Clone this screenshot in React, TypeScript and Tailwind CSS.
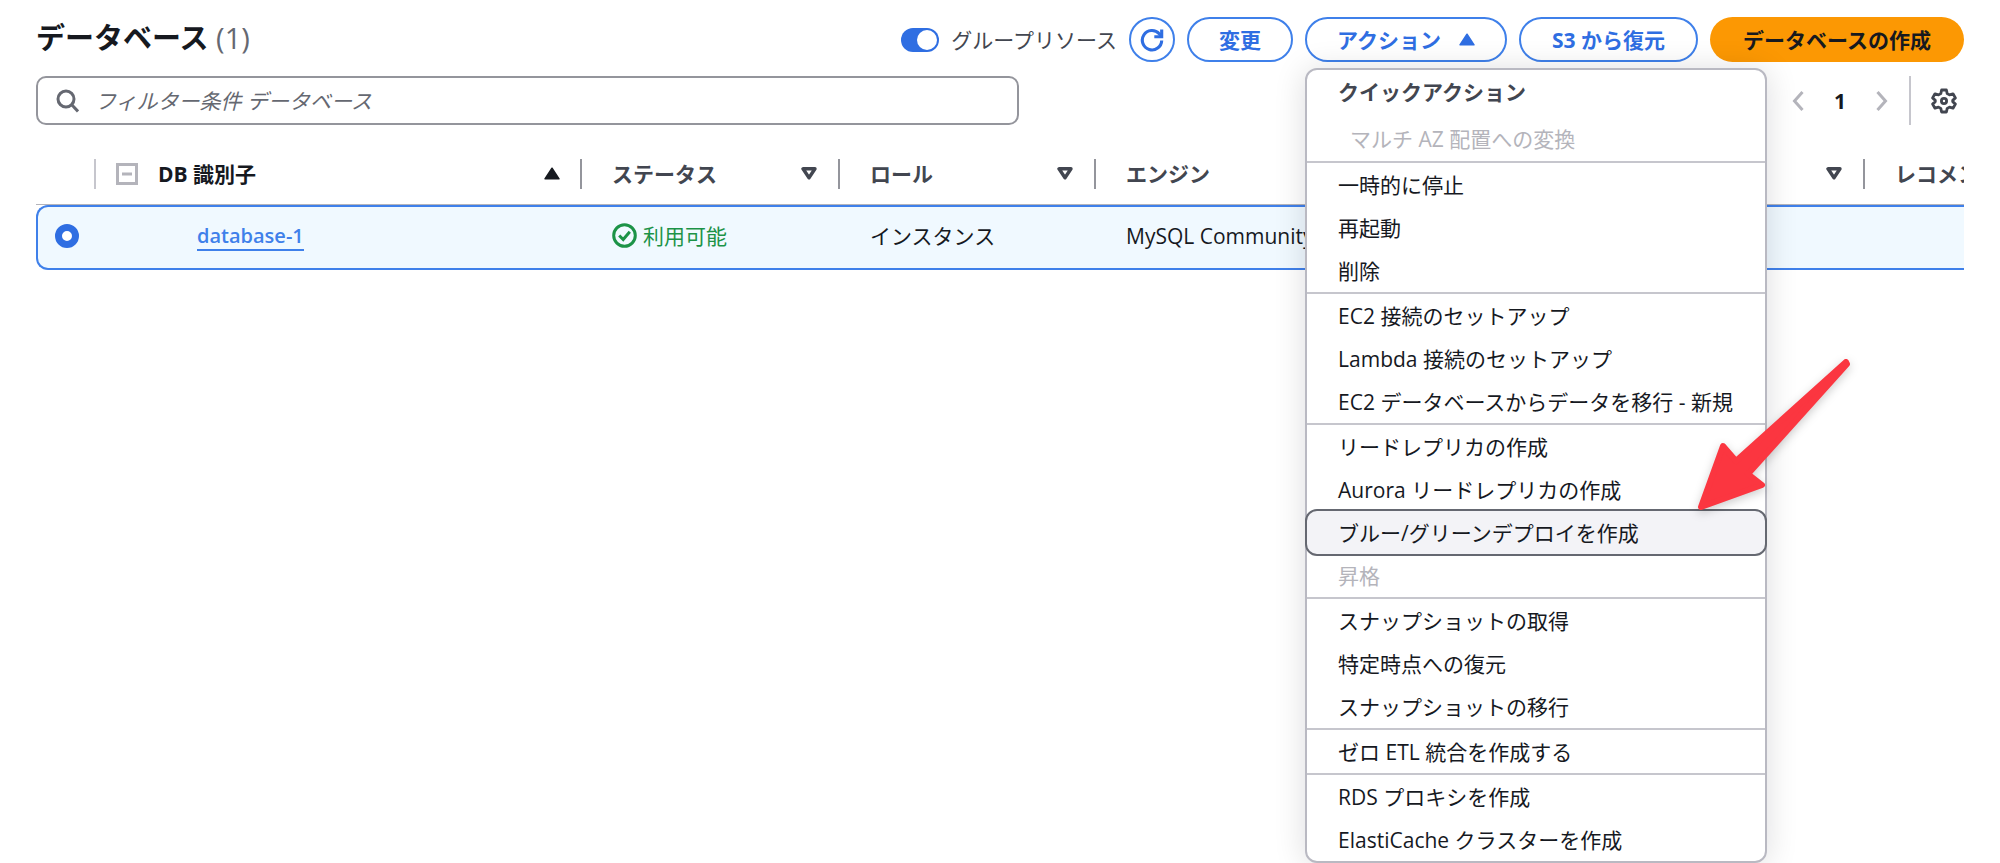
import { useState } from 'react';

interface MenuItem {
    label: string;
    disabled?: boolean;
    active?: boolean;
}

const menuSections: MenuItem[][] = [
    [{ label: '一時的に停止' }, { label: '再起動' }, { label: '削除' }],
    [
        { label: 'EC2 接続のセットアップ' },
        { label: 'Lambda 接続のセットアップ' },
        { label: 'EC2 データベースからデータを移行 - 新規' },
    ],
    [
        { label: 'リードレプリカの作成' },
        { label: 'Aurora リードレプリカの作成' },
        { label: 'ブルー/グリーンデプロイを作成', active: true },
        { label: '昇格', disabled: true },
    ],
    [{ label: 'スナップショットの取得' }, { label: '特定時点への復元' }, { label: 'スナップショットの移行' }],
    [{ label: 'ゼロ ETL 統合を作成する' }],
    [{ label: 'RDS プロキシを作成' }, { label: 'ElastiCache クラスターを作成' }],
];

const outlineButton =
    'flex h-[45px] items-center justify-center rounded-full border-2 border-[#3f80ea] font-bold text-[#2f6ee2] whitespace-nowrap';

function SortUp() {
    return (
        <svg width="16" height="13" viewBox="0 0 16 13" fill="currentColor" stroke="currentColor" strokeWidth="1.5" strokeLinejoin="round">
            <path d="M8 1.2 15 11.8H1Z" />
        </svg>
    );
}

function SortDown() {
    return (
        <svg width="16" height="13" viewBox="0 0 16 13" fill="none" stroke="#424650" strokeWidth="3.4" strokeLinejoin="round">
            <path d="M2 1.8h12L8 10.8Z" />
        </svg>
    );
}

function HeaderCell({ label }: { label: string }) {
    return (
        <th scope="col" className="h-[62px] border-b border-[#b4b4bb] p-0 text-left font-bold text-[#424650]">
            <div className="flex h-[30px] items-center justify-between border-r-2 border-[#94959c] pr-[21px] pl-[30px]">
                <span className="whitespace-nowrap">{label}</span>
                <SortDown />
            </div>
        </th>
    );
}

function ActionsMenu() {
    return (
        <div
            role="menu"
            className="absolute top-full left-0 z-10 mt-[6px] w-[462px] rounded-xl border-2 border-[#b9b9c2] bg-white text-[#16191f] shadow-[0_2px_32px_rgba(0,7,22,0.14)]"
        >
            <div className="flex h-[43px] items-center pl-[31px] font-bold text-[#424650]">クイックアクション</div>
            <button type="button" role="menuitem" disabled className="flex h-[48px] w-full items-center pt-1 pl-[43px] text-[#b4b4bb]">
                マルチ AZ 配置への変換
            </button>
            {menuSections.map((section) => (
                <div key={section[0].label} className="border-t-2 border-[#c6c6cd]">
                    {section.map((item) => (
                        <button
                            key={item.label}
                            type="button"
                            role="menuitem"
                            disabled={item.disabled}
                            className={`flex h-[43px] w-full items-center pl-[31px] whitespace-nowrap ${
                                item.active ? 'rounded-[10px] bg-[#f3f3f7] outline-2 outline-[#656871]' : ''
                            } ${item.disabled ? 'text-[#b4b4bb]' : ''}`}
                        >
                            {item.label}
                        </button>
                    ))}
                </div>
            ))}

            {/* Pointer to the blue/green item */}
            <svg
                className="pointer-events-none absolute top-[286px] left-[389px] drop-shadow-[0_3px_5px_rgba(0,0,0,0.2)]"
                width="158"
                height="160"
                viewBox="0 0 158 160"
                fill="#fb3640"
                stroke="#fb3640"
                strokeWidth="6"
                strokeLinejoin="round"
            >
                <path d="M5 151 27 90 40 105 150 6 151 8 52 118 66 129Z" />
            </svg>
        </div>
    );
}

export default function App() {
    const [grouped, setGrouped] = useState(true);
    const [menuOpen, setMenuOpen] = useState(true);
    const [filter, setFilter] = useState('');

    return (
        <main lang="ja" className="min-h-screen overflow-hidden bg-white px-9 pt-[17px] font-['Open_Sans','Noto_Sans_CJK_JP',sans-serif] text-[21px] leading-7 text-[#16191f]">
            <header className="flex h-[45px] items-center justify-between">
                <h1 className="pb-1 text-[29px] leading-9 font-bold">
                    データベース <span className="font-medium text-[#656871]">(1)</span>
                </h1>
                <div className="flex items-center gap-3">
                    <label className="flex items-center gap-3 text-[#424650]">
                        <input type="checkbox" role="switch" className="peer sr-only" checked={grouped} onChange={(e) => setGrouped(e.target.checked)} />
                        <span className="flex h-6 w-[38px] items-center rounded-full bg-[#8c8c94] p-[2px] peer-checked:justify-end peer-checked:bg-[#2f6ee2]">
                            <span className="h-5 w-5 rounded-full bg-white" />
                        </span>
                        グループリソース
                    </label>
                    <button type="button" aria-label="更新" className={`${outlineButton} w-[46px]`}>
                        <svg width="24" height="24" viewBox="0 0 26 26" fill="none" stroke="currentColor" strokeWidth="3.4">
                            <path d="M23.5 13.5A10.5 10.5 0 1 1 20.8 6.2L23.2 9" />
                            <path d="M23.5 1.5V9.5H15.5" />
                        </svg>
                    </button>
                    <button type="button" className={`${outlineButton} px-[30px]`}>変更</button>
                    <div className="relative">
                        <button type="button" aria-expanded={menuOpen} onClick={() => setMenuOpen(!menuOpen)} className={`${outlineButton} gap-[18px] px-[30px]`}>
                            アクション
                            <SortUp />
                        </button>
                        {menuOpen && <ActionsMenu />}
                    </div>
                    <button type="button" className={`${outlineButton} px-[31px]`}>S3 から復元</button>
                    <button type="button" className="h-[45px] rounded-full bg-[#fc9803] px-[33px] font-bold whitespace-nowrap">データベースの作成</button>
                </div>
            </header>

            <div className="mt-[14px] flex items-center justify-between">
                <label className="flex h-[49px] w-[51%] items-center rounded-[10px] border-2 border-[#94959c] pl-[18px]">
                    <svg width="23" height="24" viewBox="0 0 23 24" fill="none" stroke="#656871" strokeWidth="3" aria-hidden="true">
                        <circle cx="10" cy="10" r="8" />
                        <path d="m15.5 15.5 6.5 7" />
                    </svg>
                    <input
                        type="text"
                        aria-label="フィルター条件 データベース"
                        placeholder="フィルター条件 データベース"
                        value={filter}
                        onChange={(e) => setFilter(e.target.value)}
                        className="ml-4 min-w-0 flex-1 outline-none placeholder:text-[#656871] placeholder:italic"
                    />
                </label>
                <div className="flex h-[49px] items-center pr-[7px]">
                    <button type="button" aria-label="前のページ" disabled className="text-[#b4b4bb]">
                        <svg width="12" height="20" viewBox="0 0 12 20" fill="none" stroke="currentColor" strokeWidth="3">
                            <path d="M10.5 1 2.5 10l8 9" />
                        </svg>
                    </button>
                    <span className="w-[72px] text-center font-bold">1</span>
                    <button type="button" aria-label="次のページ" disabled className="text-[#b4b4bb]">
                        <svg width="12" height="20" viewBox="0 0 12 20" fill="none" stroke="currentColor" strokeWidth="3">
                            <path d="m1.5 1 8 9-8 9" />
                        </svg>
                    </button>
                    <button type="button" aria-label="設定" className="ml-[21px] flex h-full items-center border-l-2 border-[#c6c6cd] pl-5 text-[#424650]">
                        <svg width="26" height="26" viewBox="0 0 26 26" fill="none" stroke="currentColor" strokeWidth="2.8" strokeLinejoin="round">
                            <path d="M10.6 2h4.8l.8 3.6 2.3 1.3 3.5-1.1 2.4 4.1-2.7 2.5v1.2l2.7 2.5-2.4 4.1-3.5-1.1-2.3 1.3-.8 3.6h-4.8l-.8-3.6-2.3-1.3L4 20.2 1.6 16.1l2.7-2.5v-1.2L1.6 9.9 4 5.8l3.5 1.1 2.3-1.3Z" />
                            <circle cx="13" cy="13" r="2.6" />
                        </svg>
                    </button>
                </div>
            </div>

            <div className="mt-[18px] overflow-hidden">
                <table className="w-full table-fixed border-separate border-spacing-0">
                    <colgroup>
                        <col className="w-[60px]" />
                        <col className="w-[486px]" />
                        <col className="w-[258px]" />
                        <col className="w-[256px]" />
                        <col />
                        <col className="w-[99px]" />
                    </colgroup>
                    <thead>
                        <tr>
                            <th scope="col" aria-label="選択" className="border-b border-[#b4b4bb] p-0">
                                <div className="h-[30px] border-r-2 border-[#c6c6cd]" />
                            </th>
                            <th scope="col" aria-sort="ascending" className="border-b border-[#b4b4bb] p-0 text-left">
                                <div className="flex h-[30px] items-center border-r-2 border-[#94959c] pr-[20px] pl-5">
                                    <svg width="22" height="22" viewBox="0 0 22 22" fill="none" stroke="#b4b4bb" strokeWidth="3" aria-hidden="true">
                                        <path d="M1.5 1.5h19v19h-19ZM6 11h10" />
                                    </svg>
                                    <span className="ml-5 flex-1 font-bold">DB 識別子</span>
                                    <SortUp />
                                </div>
                            </th>
                            <HeaderCell label="ステータス" />
                            <HeaderCell label="ロール" />
                            <HeaderCell label="エンジン" />
                            <th scope="col" className="overflow-hidden border-b border-[#b4b4bb] p-0 pl-[30px] text-left font-bold whitespace-nowrap text-[#424650]">
                                レコメンデーション
                            </th>
                        </tr>
                    </thead>
                    <tbody>
                        <tr className="[&>td]:h-[65px] [&>td]:border-y-2 [&>td]:border-[#3f80ea] [&>td]:bg-[#f0f9ff] [&>td]:p-0 [&>td]:pb-1">
                            <td className="rounded-l-xl border-l-2">
                                <input
                                    type="radio"
                                    name="db"
                                    aria-label="database-1"
                                    defaultChecked
                                    className="ml-[17px] block h-6 w-6 appearance-none rounded-full border-[7px] border-[#2f6ee2] bg-white"
                                />
                            </td>
                            <td>
                                <a href="#database-1" className="ml-[101px] border-b-2 border-[#3f80ea] text-xl font-semibold text-[#3f80ea]">
                                    database-1
                                </a>
                            </td>
                            <td>
                                <div className="flex items-center gap-[6px] pl-[30px] text-[#1c9347]">
                                    <svg width="25" height="25" viewBox="0 0 25 25" fill="none" stroke="currentColor" strokeWidth="3" aria-hidden="true">
                                        <circle cx="12.5" cy="12.5" r="10.8" />
                                        <path d="m7.2 12.5 4 4 6.6-7.7" />
                                    </svg>
                                    利用可能
                                </div>
                            </td>
                            <td><div className="pl-[30px]">インスタンス</div></td>
                            <td><div className="pl-[30px]">MySQL Community</div></td>
                            <td />
                        </tr>
                    </tbody>
                </table>
            </div>
        </main>
    );
}
